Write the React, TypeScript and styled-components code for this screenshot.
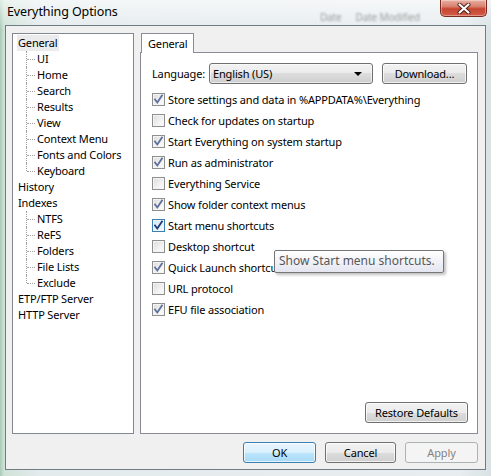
import React from 'react';
import styled, { createGlobalStyle, css } from 'styled-components';

const Global = createGlobalStyle`
  html, body { margin: 0; padding: 0; }
  body {
    width: 491px; height: 476px; overflow: hidden;
    background: #c7dccf;
    font-family: "Noto Sans", "Open Sans", sans-serif;
    font-size: 11px; letter-spacing: -0.15px; color: #000;
  }
`;

const Window = styled.div`
  width: 491px; height: 476px; box-sizing: border-box;
  display: flex; flex-direction: column;
  padding: 0 5px 6px 5px;
  background:
    linear-gradient(to bottom, rgba(255,255,255,0.6) 0px, rgba(255,255,255,0) 30px),
    linear-gradient(to right, #a8c9b6 0px, #cfe2d7 4px, #e4ebed 40px, #e8edef 460px, #d9e2e4 491px);
`;

const TitleBar = styled.div`
  height: 25px; display: flex; align-items: flex-start;
`;

const Title = styled.div`
  margin: 3px 0 0 2px;
  font-size: 12.5px; letter-spacing: -0.1px; line-height: 18px; color: #000;
`;

const Ghost = styled.div`
  margin: 10px 20px 0 auto; display: flex; gap: 14px;
  font-size: 10px; color: rgba(50, 50, 50, 0.45); filter: blur(1.2px);
`;

const CloseBtn = styled.div`
  width: 47px; height: 17px; margin-right: -1px; box-sizing: border-box;
  border: 1px solid #7b2a22; border-top: none;
  border-radius: 0 0 5px 5px;
  background: linear-gradient(to bottom, #e9b0a2 0%, #d98170 40%, #c54632 55%, #d45c47 100%);
  box-shadow: inset 0 0 0 1px rgba(255,255,255,0.35);
  display: flex; align-items: center; justify-content: center;
`;

const Client = styled.div`
  flex: 1; display: flex; flex-direction: column;
  border: 1px solid #6f7c84; background: #f0f0f0;
  padding: 7px 7px 6px 6px;
`;

const Main = styled.div`
  height: 401px; display: flex; gap: 6px;
`;

const Tree = styled.div`
  width: 122px; box-sizing: border-box;
  border: 1px solid #828790; background: #fff;
  padding-top: 1px; display: flex; flex-direction: column;
`;

const TreeRow = styled.div<{ $child?: boolean; $last?: boolean }>`
  position: relative; height: 16px; display: flex; align-items: center;
  padding-left: ${p => (p.$child ? '23px' : '4px')};
  ${p => p.$child && css`
    &::before {
      content: ''; position: absolute; left: 13px; top: 0;
      height: ${p.$last ? '8px' : '16px'};
      border-left: 1px dotted #a0a0a0;
    }
    &::after {
      content: ''; position: absolute; left: 14px; top: 8px; width: 8px;
      border-top: 1px dotted #a0a0a0;
    }
  `}
`;

const TreeLabel = styled.span<{ $selected?: boolean }>`
  padding: 0 1px; height: 16px; line-height: 16px;
  background: ${p => (p.$selected ? '#ebebeb' : 'transparent')};
`;

const TabArea = styled.div`
  flex: 1; display: flex; flex-direction: column;
`;

const TabStrip = styled.div`
  height: 19px; display: flex; padding-left: 1px;
`;

const Tab = styled.div`
  position: relative; z-index: 1;
  width: 53px; height: 20px; box-sizing: border-box;
  border: 1px solid #898c95; border-bottom: none;
  background: #fff; padding-left: 6px;
  line-height: 19px;
`;

const TabBody = styled.div`
  position: relative; flex: 1;
  border: 1px solid #898c95; background: #fff;
  padding: 10px 9px 10px 11px;
  display: flex; flex-direction: column;
`;

const LangRow = styled.div`
  height: 21px; display: flex; align-items: center;
`;

const LangLabel = styled.div`
  width: 57px;
`;

const Combo = styled.div`
  width: 164px; height: 21px; box-sizing: border-box;
  border: 1px solid #707070; border-radius: 3px;
  background: linear-gradient(to bottom, #f2f2f2 0%, #ebebeb 50%, #dddddd 50%, #cfcfcf 100%);
  box-shadow: inset 0 0 0 1px rgba(255,255,255,0.6);
  display: flex; align-items: center; padding: 0 10px 0 3px;
`;

const ComboText = styled.span`
  flex: 1;
`;

const Arrow = styled.span`
  width: 0; height: 0;
  border-left: 4px solid transparent; border-right: 4px solid transparent;
  border-top: 4px solid #000;
`;

const Button = styled.button<{ $w: number; $default?: boolean }>`
  width: ${p => p.$w}px; height: 21px; box-sizing: border-box; padding: 0;
  font: inherit; letter-spacing: inherit; color: #000;
  border: 1px solid ${p => (p.$default ? '#3c7fb1' : '#707070')};
  border-radius: 3px;
  background: ${p => p.$default
    ? 'linear-gradient(to bottom, #eaf6fd 0%, #d9f0fc 50%, #bee6fd 50%, #a7d9f5 100%)'
    : 'linear-gradient(to bottom, #f2f2f2 0%, #ebebeb 50%, #dddddd 50%, #cfcfcf 100%)'};
  box-shadow: inset 0 0 0 1px rgba(255,255,255,0.7);
  &:disabled {
    border-color: #adb2b5; background: #f4f4f4; color: #838383; box-shadow: none;
  }
`;

const Spacer = styled.div`
  width: 9px;
`;

const Checks = styled.div`
  margin-top: 5px; display: flex; flex-direction: column;
`;

const CheckRow = styled.div`
  height: 21px; display: flex; align-items: center; gap: 3px;
`;

const Box = styled.span<{ $hot?: boolean }>`
  width: 13px; height: 13px; box-sizing: border-box;
  border: 1px solid ${p => (p.$hot ? '#3c7fb1' : '#8e8f8f')};
  background: ${p => p.$hot
    ? 'linear-gradient(135deg, #cfe8f6 0%, #f3fafe 100%)'
    : 'linear-gradient(135deg, #dcdcdc 0%, #f6f6f6 70%, #fdfdfd 100%)'};
  box-shadow: inset 0 0 0 1px #f4f4f4;
  display: flex;
`;

const Footer = styled.div`
  margin-top: auto; display: flex; justify-content: flex-end;
`;

const ButtonBar = styled.div`
  margin-top: 8px; display: flex; justify-content: flex-end; gap: 9px;
`;

const Tooltip = styled.div`
  position: absolute; left: 133px; top: 197px;
  width: 170px; height: 23px; box-sizing: border-box;
  border: 1px solid #767676; border-radius: 2px;
  background: linear-gradient(to bottom, #ffffff 0%, #e4e5f0 100%);
  box-shadow: 2px 2px 3px rgba(0,0,0,0.25);
  color: #575757; padding-left: 4px; line-height: 20px;
  font-size: 12px; letter-spacing: 0;
`;

const Check = ({ checked, hot }: { checked: boolean; hot?: boolean }) => (
  <Box $hot={hot}>
    {checked && (
      <svg width="11" height="11" viewBox="0 0 11 11">
        <path
          d="M2 5.5 L4.3 8.5 L9 1.5"
          fill="none"
          stroke={hot ? '#1f3a7a' : '#5d6f9c'}
          strokeWidth="1.8"
          strokeLinecap="square"
        />
      </svg>
    )}
  </Box>
);

const tree: { label: string; child?: boolean; last?: boolean; selected?: boolean }[] = [
  { label: 'General', selected: true },
  { label: 'UI', child: true },
  { label: 'Home', child: true },
  { label: 'Search', child: true },
  { label: 'Results', child: true },
  { label: 'View', child: true },
  { label: 'Context Menu', child: true },
  { label: 'Fonts and Colors', child: true },
  { label: 'Keyboard', child: true, last: true },
  { label: 'History' },
  { label: 'Indexes' },
  { label: 'NTFS', child: true },
  { label: 'ReFS', child: true },
  { label: 'Folders', child: true },
  { label: 'File Lists', child: true },
  { label: 'Exclude', child: true, last: true },
  { label: 'ETP/FTP Server' },
  { label: 'HTTP Server' },
];

const options: { label: string; checked: boolean; hot?: boolean }[] = [
  { label: 'Store settings and data in %APPDATA%\\Everything', checked: true },
  { label: 'Check for updates on startup', checked: false },
  { label: 'Start Everything on system startup', checked: true },
  { label: 'Run as administrator', checked: true },
  { label: 'Everything Service', checked: false },
  { label: 'Show folder context menus', checked: true },
  { label: 'Start menu shortcuts', checked: true, hot: true },
  { label: 'Desktop shortcut', checked: false },
  { label: 'Quick Launch shortcut', checked: true },
  { label: 'URL protocol', checked: false },
  { label: 'EFU file association', checked: true },
];

export default function App() {
  return (
    <>
      <Global />
      <Window>
        <TitleBar>
          <Title>Everything Options</Title>
          <Ghost>
            <span>Date</span>
            <span>Date Modified</span>
          </Ghost>
          <CloseBtn>
            <svg width="14" height="11" viewBox="0 0 14 11">
              <path d="M2.5 1.5 L11.5 9.5 M11.5 1.5 L2.5 9.5" stroke="#4a1a14" strokeWidth="4" strokeLinecap="round" />
              <path d="M2.5 1.5 L11.5 9.5 M11.5 1.5 L2.5 9.5" stroke="#ffffff" strokeWidth="2.2" strokeLinecap="round" />
            </svg>
          </CloseBtn>
        </TitleBar>
        <Client>
          <Main>
            <Tree>
              {tree.map(t => (
                <TreeRow key={t.label} $child={t.child} $last={t.last}>
                  <TreeLabel $selected={t.selected}>{t.label}</TreeLabel>
                </TreeRow>
              ))}
            </Tree>
            <TabArea>
              <TabStrip>
                <Tab>General</Tab>
              </TabStrip>
              <TabBody>
                <LangRow>
                  <LangLabel>Language:</LangLabel>
                  <Combo>
                    <ComboText>English (US)</ComboText>
                    <Arrow />
                  </Combo>
                  <Spacer />
                  <Button $w={85}>Download...</Button>
                </LangRow>
                <Checks>
                  {options.map(o => (
                    <CheckRow key={o.label}>
                      <Check checked={o.checked} hot={o.hot} />
                      <span>{o.label}</span>
                    </CheckRow>
                  ))}
                </Checks>
                <Footer>
                  <Button $w={103}>Restore Defaults</Button>
                </Footer>
                <Tooltip>Show Start menu shortcuts.</Tooltip>
              </TabBody>
            </TabArea>
          </Main>
          <ButtonBar>
            <Button $w={73} $default>OK</Button>
            <Button $w={71}>Cancel</Button>
            <Button $w={73} disabled>Apply</Button>
          </ButtonBar>
        </Client>
      </Window>
    </>
  );
}
